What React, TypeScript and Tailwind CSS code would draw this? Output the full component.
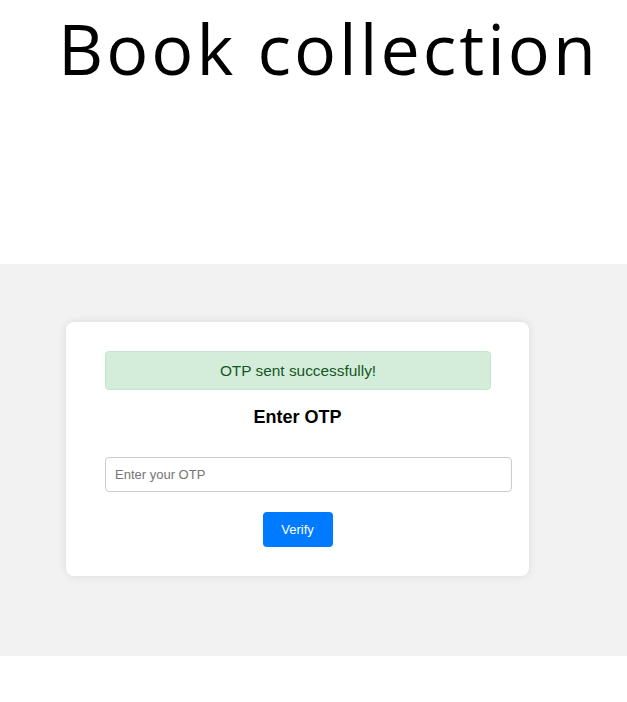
export default function App() {
  return (
    <div className="min-h-[702px] bg-white font-['Liberation_Sans',Arial,sans-serif]">
      {/* Title */}
      <div className="h-[264px] pl-[58px] pt-[13px]">
        <h1 className="font-['Open_Sans',sans-serif] text-[70px] font-normal leading-none tracking-[3px] text-black [font-variant-ligatures:none]">
          Book collection
        </h1>
      </div>

      {/* OTP section */}
      <div className="h-[392px] bg-[#f2f2f2] pl-[66px] pt-[58px]">
        <div className="w-[463px] h-[254px] rounded-lg bg-white px-[39px] pt-[29px] shadow-[0_0_10px_rgba(0,0,0,0.1)]">
          <div className="flex h-[39px] w-[386px] items-center justify-center rounded border border-[#c3e6cb] bg-[#d4edda] text-[15.4px] text-[#155724]">
            OTP sent successfully!
          </div>
          <h3 className="mt-[17px] h-[21px] text-center text-[18px] font-bold leading-[21px] text-black">
            Enter OTP
          </h3>
          <input
            type="text"
            placeholder="Enter your OTP"
            className="mt-[29px] block h-[35px] w-[407px] rounded border border-[#cccccc] pl-[9px] pr-[10px] text-[13px] text-black outline-none placeholder:text-[#757575]"
          />
          <div className="mt-[20px] flex justify-center">
            <button className="h-[35px] w-[70px] rounded bg-[#007bff] text-[13px] text-white">
              Verify
            </button>
          </div>
        </div>
      </div>
    </div>
  );
}
